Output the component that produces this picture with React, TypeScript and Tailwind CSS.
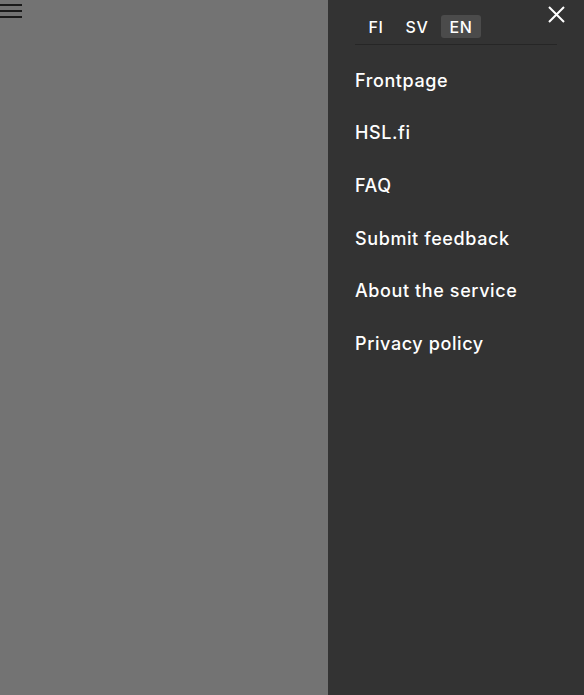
import React from "react";

const items = ["Frontpage", "HSL.fi", "FAQ", "Submit feedback", "About the service", "Privacy policy"];

export default function App() {
  return (
    <div className="flex h-[695px] w-[584px] overflow-hidden" style={{ fontFamily: 'Inter, "Open Sans", "Liberation Sans", sans-serif' }}>
      <div className="relative h-full w-[328px] bg-[#737373]">
        <div className="absolute left-0 top-[4px] flex w-[22px] flex-col gap-[4px]">
          <div className="h-[2px] bg-[#1a1a1a]" />
          <div className="h-[2px] bg-[#1a1a1a]" />
          <div className="h-[2px] bg-[#1a1a1a]" />
        </div>
      </div>
      <div className="relative flex h-full w-[256px] flex-col bg-[#333333] px-[27px] text-white">
        <button className="absolute right-[19px] top-[6px] h-[17px] w-[17px]" aria-label="close">
          <svg viewBox="0 0 17 17" className="h-[17px] w-[17px]">
            <path d="M1 1 L16 16 M16 1 L1 16" stroke="white" strokeWidth="2" />
          </svg>
        </button>
        <div className="flex h-[45px] items-end border-b border-[#262626] pb-[6px] pl-[4px]">
          <div className="flex gap-[4px] text-[16px] font-medium leading-none tracking-[0.6px]">
            <span className="flex h-[23px] w-[34px] items-center justify-center rounded-[3px]">FI</span>
            <span className="flex h-[23px] w-[40px] items-center justify-center rounded-[3px]">SV</span>
            <span className="flex h-[23px] w-[40px] items-center justify-center rounded-[3px] bg-[#4b4b4b]">EN</span>
          </div>
        </div>
        <div className="mt-[9px] flex flex-col">
          {items.map((t) => (
            <div key={t} className="flex h-[52.6px] items-center text-[18px] font-medium tracking-[0.6px]">
              {t}
            </div>
          ))}
        </div>
      </div>
    </div>
  );
}
